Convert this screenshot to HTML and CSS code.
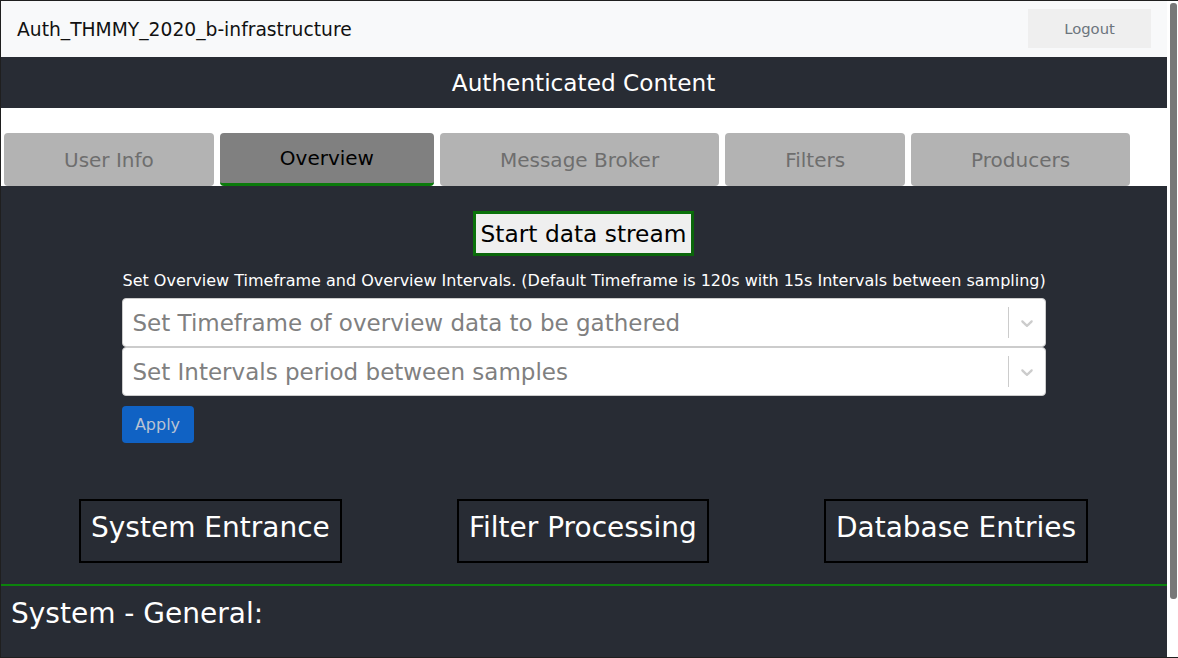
FILE: index.html
```html
<!DOCTYPE html>
<html lang="en">
<head>
<meta charset="utf-8">
<title>Auth_THMMY_2020_b-infrastructure</title>
<link rel="stylesheet" href="styles.css">
</head>
<body>
<div class="frame"></div>
<div class="scrollbar"><div class="scroll-thumb"></div></div>
<header class="navbar">
  <span class="brand">Auth_THMMY_2020_b-infrastructure</span>
  <button class="logout" type="button">Logout</button>
</header>
<div class="banner">Authenticated Content</div>
<nav class="tabs">
  <div class="tab">User Info</div>
  <div class="tab active">Overview</div>
  <div class="tab">Message Broker</div>
  <div class="tab">Filters</div>
  <div class="tab">Producers</div>
</nav>
<main class="panel">
  <div class="controls">
    <button class="stream" type="button">Start data stream</button>
    <div class="form">
      <p class="hint">Set Overview Timeframe and Overview Intervals. (Default Timeframe is 120s with 15s Intervals between sampling)</p>
      <div class="select">
        <div class="select-value">Set Timeframe of overview data to be gathered</div>
        <div class="select-indicators">
          <span class="select-sep"></span>
          <span class="select-arrow"><svg viewBox="0 0 20 20" width="20" height="20"><path d="M4.516 7.548c0.436-0.446 1.043-0.481 1.576 0l3.908 3.747 3.908-3.747c0.533-0.481 1.141-0.446 1.574 0 0.436 0.445 0.408 1.197 0 1.615-0.406 0.418-4.695 4.502-4.695 4.502-0.217 0.223-0.502 0.335-0.787 0.335s-0.57-0.112-0.789-0.335c0 0-4.287-4.084-4.695-4.502s-0.436-1.17 0-1.615z"/></svg></span>
        </div>
      </div>
      <div class="select">
        <div class="select-value">Set Intervals period between samples</div>
        <div class="select-indicators">
          <span class="select-sep"></span>
          <span class="select-arrow"><svg viewBox="0 0 20 20" width="20" height="20"><path d="M4.516 7.548c0.436-0.446 1.043-0.481 1.576 0l3.908 3.747 3.908-3.747c0.533-0.481 1.141-0.446 1.574 0 0.436 0.445 0.408 1.197 0 1.615-0.406 0.418-4.695 4.502-4.695 4.502-0.217 0.223-0.502 0.335-0.787 0.335s-0.57-0.112-0.789-0.335c0 0-4.287-4.084-4.695-4.502s-0.436-1.17 0-1.615z"/></svg></span>
        </div>
      </div>
      <button class="apply" type="button">Apply</button>
    </div>
  </div>
  <div class="stages">
    <div class="stage">System Entrance</div>
    <div class="stage">Filter Processing</div>
    <div class="stage">Database Entries</div>
  </div>
</main>
<section class="general">
  <h2 class="general-title">System - General:</h2>
</section>
</body>
</html>
```
FILE: styles.css
```css
html {
  background: #fff;
}
body {
  margin: 0 11px 0 0;
  font-family: "DejaVu Sans", Verdana, sans-serif;
  color: #212529;
}
.frame {
  position: fixed;
  top: 0;
  left: 0;
  right: 0;
  bottom: 0;
  border-top: 1px solid #1f1f1f;
  border-left: 1px solid #1f1f1f;
  border-bottom: 1px solid #1f1f1f;
  pointer-events: none;
  z-index: 10;
}
.scrollbar {
  position: fixed;
  top: 0;
  right: 0;
  bottom: 0;
  width: 11px;
  background: #fff;
  z-index: 5;
}
.scroll-thumb {
  margin: 3px 1px 0 3px;
  height: 596px;
  background: #787878;
  border-radius: 3px;
}
.navbar {
  height: 57px;
  background: #f8f9fa;
  display: flex;
  align-items: center;
  justify-content: space-between;
  padding: 1px 16px 0 17px;
  box-sizing: border-box;
}
.brand {
  font-size: 18.7px;
  color: #111;
}
.logout {
  font-family: inherit;
  font-size: 14.8px;
  color: #6c757d;
  background: #efefef;
  border: none;
  width: 123px;
  height: 39px;
  padding: 0;
  margin-top: -1px;
}
.banner {
  height: 51px;
  background: #282c34;
  color: #fff;
  font-size: 23.2px;
  display: flex;
  align-items: center;
  justify-content: center;
}
.tabs {
  background: #fff;
  display: flex;
  gap: 6px;
  padding: 25px 0 0 4px;
}
.tab {
  height: 53px;
  box-sizing: border-box;
  padding: 1px 60px 0;
  display: flex;
  align-items: center;
  justify-content: center;
  background: #b3b3b3;
  color: #6e6e6e;
  font-size: 20px;
  border-radius: 4px;
}
.tab.active {
  background: #808080;
  color: #000;
  border-bottom: 3px solid #0b7a0b;
  padding-top: 0;
}
.panel {
  background: #282c34;
  padding: 25px 0 21px;
  border-bottom: 2px solid #0c830c;
}
.controls {
  display: flex;
  flex-direction: column;
  align-items: center;
}
.stream {
  font-family: inherit;
  font-size: 23.3px;
  line-height: 27px;
  color: #000;
  background: #efefef;
  border: 3px solid;
  border-color: #0b720b #0a650a #0a650a #0b720b;
  padding: 6px 5px;
  margin: 0;
}
.form {
  width: 924px;
}
.hint {
  margin: 15px 0 8px 1px;
  font-size: 16px;
  line-height: 19px;
  color: #fff;
  white-space: nowrap;
}
.select {
  height: 49px;
  box-sizing: border-box;
  background: #fff;
  border: 1px solid #cccccc;
  border-radius: 4px;
  display: flex;
  align-items: center;
}
.select-value {
  flex: 1;
  padding-left: 10px;
  font-size: 23px;
  color: #808080;
  white-space: nowrap;
  overflow: hidden;
}
.select-indicators {
  display: flex;
  align-items: center;
  align-self: stretch;
}
.select-sep {
  width: 1px;
  align-self: stretch;
  margin: 8px 0;
  background: #cccccc;
}
.select-arrow {
  display: flex;
  padding: 8px;
}
.select-arrow svg {
  fill: #cccccc;
}
.apply {
  margin-top: 10px;
  font-family: inherit;
  font-size: 16px;
  color: #b9c3d3;
  background: #1062c4;
  border: none;
  border-radius: 4px;
  width: 72px;
  height: 37px;
  padding: 0;
}
.stages {
  display: flex;
  justify-content: space-between;
  padding: 0 79px;
  margin-top: 56px;
}
.stage {
  border: 2px solid #000;
  color: #fff;
  font-size: 28px;
  padding: 10px 10px 16px;
  line-height: 34px;
}
.general {
  background: #282c34;
  height: 140px;
  padding: 11px 11px 0;
  box-sizing: border-box;
}
.general-title {
  margin: 0;
  font-weight: normal;
  font-size: 28px;
  color: #fff;
  line-height: 33px;
}
```
